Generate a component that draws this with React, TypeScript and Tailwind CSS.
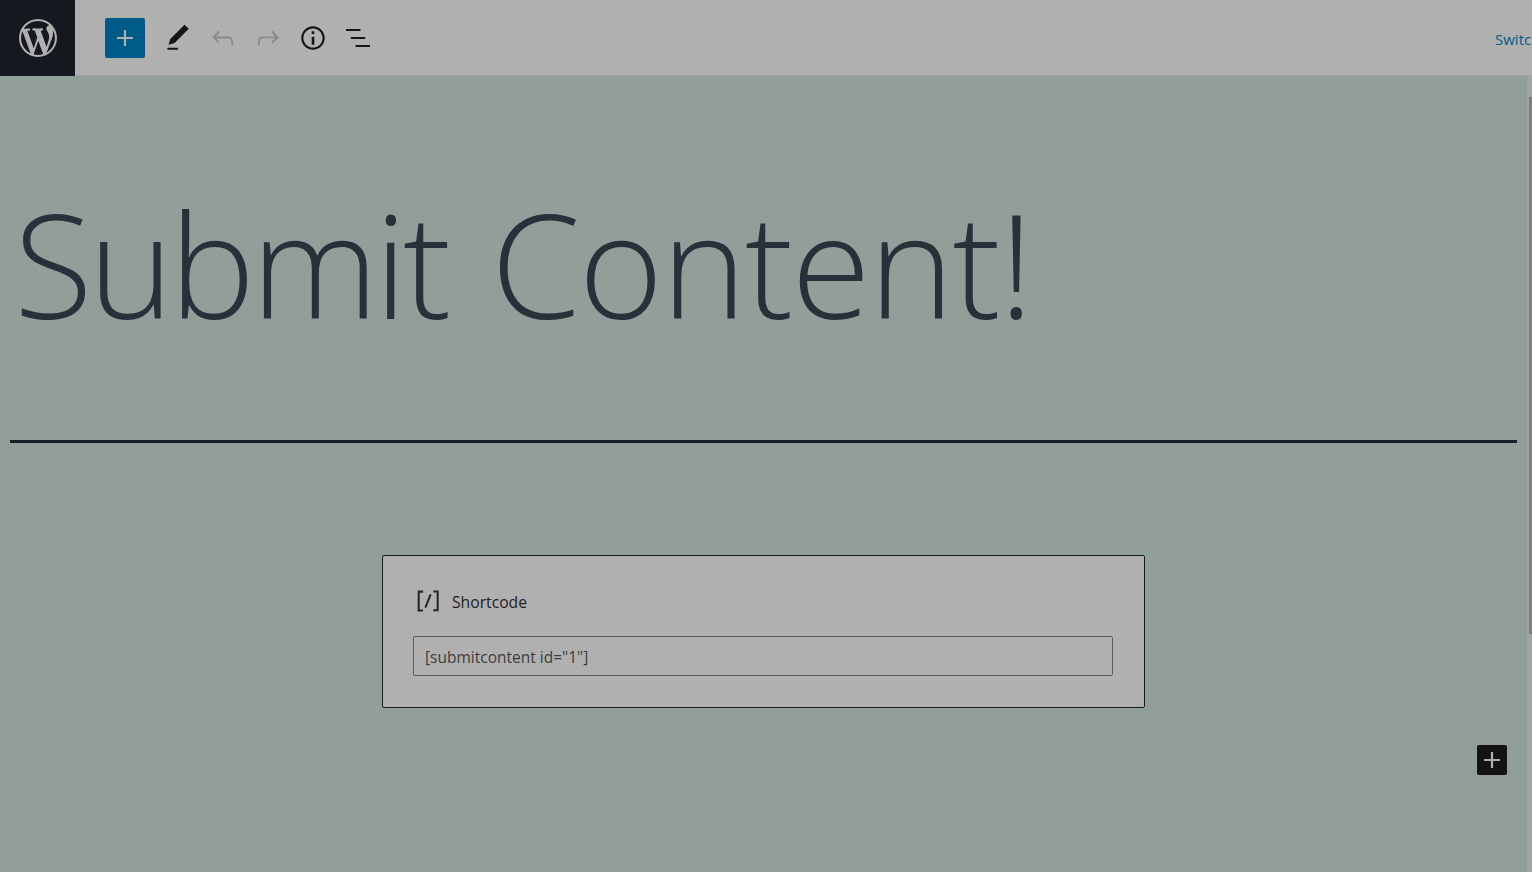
const Icon = ({ d, className }: { d: string; className: string }) => (
  <svg viewBox="0 0 24 24" className={className} fill="currentColor">
    <path d={d} />
  </svg>
);

const plus = "M18 11.2h-5.2V6h-1.6v5.2H6v1.6h5.2V18h1.6v-5.2H18z";
const pencil = "M20.1 5.1L16.9 2 6.2 12.7l-1.3 4.4 4.5-1.3L20.1 5.1zM4 20.8h8v-1.5H4v1.5z";
const undo = "M18.3 11.7c-.6-.6-1.4-.9-2.3-.9H6.7l2.9-3.3-1.1-1-4.5 5L8.5 16l1-1-2.7-2.7H16c.5 0 .9.2 1.3.5 1 1 1 3.4 1 4.5v.3h1.5v-.2c0-1.5 0-4.3-1.5-5.7z";
const redo = "M15.6 6.5l-1.1 1 2.9 3.3H8c-.9 0-1.7.3-2.3.9-1.4 1.5-1.4 4.2-1.4 5.6v.2h1.5v-.3c0-1.1 0-3.5 1-4.5.3-.3.7-.5 1.3-.5h9.2L14.5 15l1.1 1.1 4.6-4.6-4.6-5z";
const info = "M12 3.2c-4.8 0-8.8 3.9-8.8 8.8 0 4.8 3.9 8.8 8.8 8.8 4.8 0 8.8-3.9 8.8-8.8 0-4.8-4-8.8-8.8-8.8zm0 16c-4 0-7.2-3.3-7.2-7.2C4.8 8 8 4.8 12 4.8s7.2 3.3 7.2 7.2c0 4-3.2 7.2-7.2 7.2zM11 17h2v-6h-2v6zm0-8h2V7h-2v2z";
const listView = "M13.8 5.2H3v1.5h10.8V5.2zm-3.6 12v1.5H21v-1.5H10.2zm7.2-6H6.6v1.5h10.8v-1.5z";
const shortcode = "M16 4.2v1.5h2.5v12.5H16v1.5h4V4.2h-4zM4.2 19.8h4v-1.5H5.8V5.8h2.5V4.2h-4l-.1 15.6zm5.1-3.1l1.4.6 4-10-1.4-.6-4 10z";
const wpLogo = "M20 10c0-5.51-4.49-10-10-10C4.48 0 0 4.49 0 10c0 5.52 4.48 10 10 10 5.51 0 10-4.48 10-10zM7.78 15.37L4.37 6.22c.55-.02 1.17-.08 1.17-.08.5-.06.44-1.13-.06-1.11 0 0-1.45.11-2.37.11-.18 0-.37 0-.58-.01C4.12 2.69 6.87 1.11 10 1.11c2.33 0 4.45.87 6.05 2.34-.68-.11-1.65.39-1.65 1.58 0 .74.45 1.36.9 2.1.35.61.55 1.36.55 2.46 0 1.49-1.4 5-1.4 5l-3.03-8.37c.54-.02.82-.17.82-.17.5-.05.44-1.25-.06-1.22 0 0-1.44.12-2.38.12-.87 0-2.33-.12-2.33-.12-.5-.03-.56 1.2-.06 1.22l.92.08 1.26 3.41zM17.41 10c.24-.64.74-1.87.43-4.25.7 1.29 1.05 2.71 1.05 4.25 0 3.29-1.73 6.24-4.4 7.78.97-2.59 1.94-5.2 2.92-7.78zM6.1 18.09C3.12 16.65 1.11 13.53 1.11 10c0-1.3.23-2.48.72-3.59C3.25 10.3 4.67 14.2 6.1 18.09zm4.03-6.63l2.58 6.98c-.86.29-1.76.45-2.71.45-.79 0-1.57-.11-2.29-.33.81-2.38 1.62-4.74 2.42-7.1z";

export default function App() {
  return (
    <div className="h-[872px] w-[1532px] overflow-hidden bg-[#929e99] font-['Open_Sans',sans-serif]">
      {/* Top toolbar */}
      <header className="flex h-[76px] items-start border-b border-[#a0a0a0] bg-[#b0b0b0]">
        <div className="flex h-[76px] w-[75px] shrink-0 items-center justify-center bg-[#15181e] text-[#b0b0b0]">
          <svg viewBox="0 0 20 20" className="h-[38px] w-[38px]" fill="currentColor">
            <path d={wpLogo} />
          </svg>
        </div>
        <div className="ml-[30px] flex h-[75px] items-center gap-[13px]">
          <div className="mr-[4px] flex h-10 w-10 items-center justify-center rounded-[2px] bg-[#005a87] text-[#b0b0b0]">
            <Icon d={plus} className="h-8 w-8" />
          </div>
          <Icon d={pencil} className="h-8 w-8 text-[#151515]" />
          <Icon d={undo} className="h-8 w-8 text-[#8a8a8a]" />
          <Icon d={redo} className="h-8 w-8 text-[#8a8a8a]" />
          <Icon d={info} className="h-8 w-8 text-[#151515]" />
          <Icon d={listView} className="h-8 w-8 text-[#151515]" />
        </div>
        <div className="ml-auto flex h-[75px] w-[37px] items-center overflow-hidden whitespace-nowrap pt-[3px] text-[15px] text-[#005a87]">
          Switch to draft
        </div>
      </header>

      <div className="flex h-[796px]">
        <main className="min-w-0 flex-1 pl-[10px] pr-[10px]">
          <h1 className="mt-[97px] whitespace-nowrap pl-[4px] text-[144px] leading-[180px] font-light tracking-[-1.6px] [word-spacing:8px] text-[#29303a]">
            <span className="tracking-[-4px]">Submit</span> Content!
          </h1>
          <hr className="mt-[87px] border-t-[3px] border-[#16202b]" />

          <div className="ml-[372px] mt-[112px] h-[153px] w-[763px] rounded-[2px] border border-[#15181e] bg-[#b0b0b0] pl-[30px] pr-[31px] pt-[30px]">
            <div className="flex h-[30px] items-center text-[#242424]">
              <Icon d={shortcode} className="-ml-px h-8 w-8 shrink-0" />
              <span className="ml-[8px] pt-[4px] text-[15.7px] font-medium text-[#222222]">Shortcode</span>
            </div>
            <div className="mt-[20px] flex h-10 items-center rounded-[2px] border border-[#5a5a5a] px-[11px] pt-[3px] text-[15.5px] text-[#3d3d3d]">
              [submitcontent id="1"]
            </div>
          </div>

          <div className="ml-[1467px] mt-[37px] flex h-[30px] w-[30px] items-center justify-center rounded-[2px] bg-[#131313] text-[#b0b0b0]">
            <Icon d={plus} className="h-8 w-8 shrink-0" />
          </div>
        </main>

        {/* Scrollbar */}
        <div className="w-[5px] shrink-0 bg-[#a0a5a3] pl-[2px]">
          <div className="mt-[21px] h-[537px] w-full bg-[#7d7d7d]" />
        </div>
      </div>
    </div>
  );
}
